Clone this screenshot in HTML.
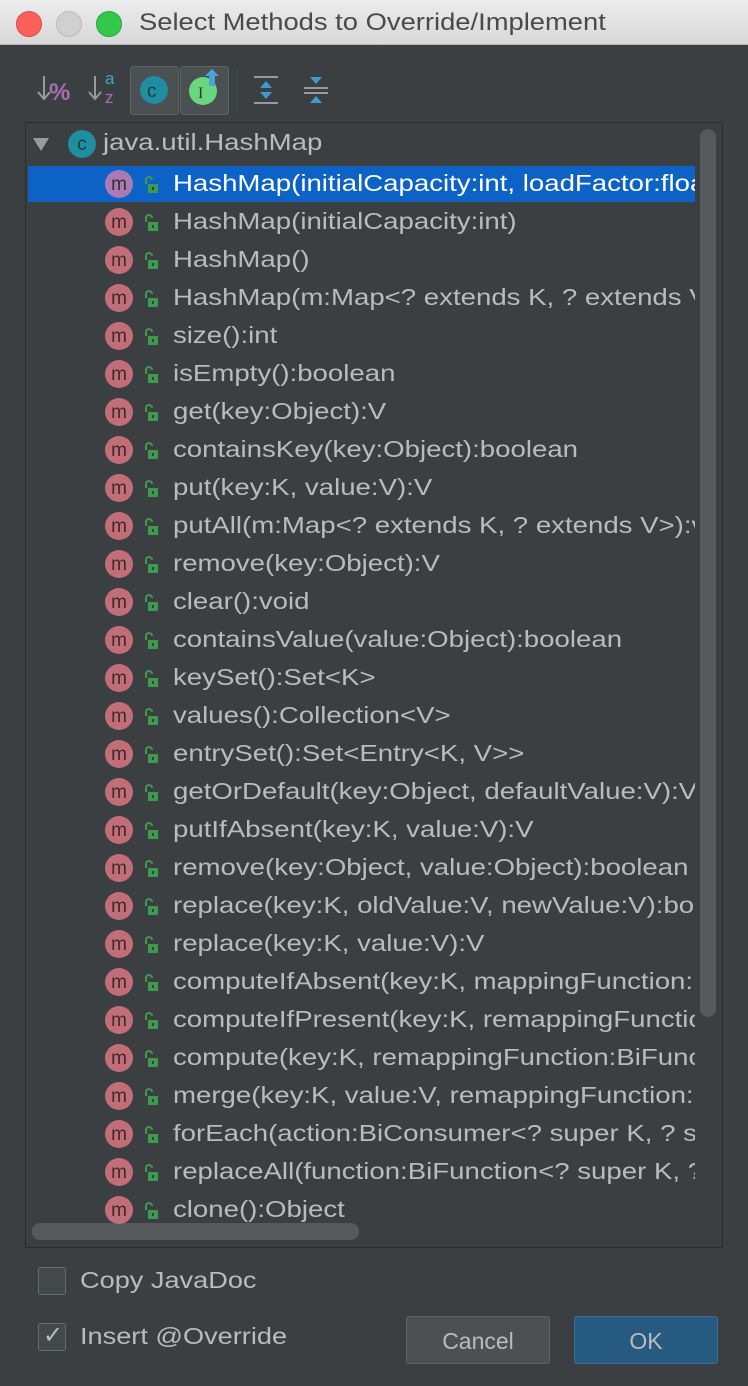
<!DOCTYPE html><html><head><style>
body{margin:0;width:748px;height:1386px;background:#3c3f41;font-family:"Liberation Sans",sans-serif;overflow:hidden;position:relative}
.tb{position:absolute;left:0;top:0;width:748px;height:44px;background:linear-gradient(#ececec,#d8d8d8);border-bottom:1px solid #b8b8b8}
.dot{position:absolute;top:11px;width:24px;height:24px;border-radius:50%}
.tt{position:absolute;left:139px;top:9px;font-size:24px;color:#4a4a4a;transform:scaleX(1.14);transform-origin:left}
.list{position:absolute;left:25px;top:122px;width:696px;height:1124px;border:1px solid #2b2b2b;background:#3c3f41;overflow:hidden}
.row{position:absolute;left:2px;width:667px;height:36px;color:#bbb;font-size:23px;white-space:nowrap;overflow:hidden}
.row span.t{position:absolute;left:145px;top:4px;transform:scaleX(1.2);transform-origin:left}
.m{position:absolute;left:77px;top:4px;width:28px;height:28px;border-radius:50%;background:#c26e78;color:#3c2a2d;font-size:19px;text-align:center;line-height:30px}
.lk{position:absolute;left:115px;top:10px}
.sel{background:#0d63c5;color:#fff}
.sel .m{background:#a97bb5}
.vs{position:absolute;left:674px;top:6px;width:16px;height:888px;background:#56595b;border-radius:8px}
.hs{position:absolute;left:6px;top:1100px;width:327px;height:17px;background:#56595b;border-radius:8px}
.cb{position:absolute;left:38px;width:28px;height:28px;border:1px solid #6b6b6b;border-radius:3px;background:#43494a;box-sizing:border-box}
.lbl{position:absolute;left:80px;font-size:23px;color:#bbb;transform:scaleX(1.18);transform-origin:left}
.btn{position:absolute;top:1316px;width:144px;height:48px;border-radius:3px;font-size:23px;color:#bbb;text-align:center;line-height:48px;box-sizing:border-box}
</style></head><body>
<div class="tb">
<div class="dot" style="left:16px;background:#fc605b;border:1px solid #de4a45"></div>
<div class="dot" style="left:56px;background:#d0d0d0;border:1px solid #bbb"></div>
<div class="dot" style="left:96px;background:#34c84a;border:1px solid #27a83a"></div>
<div class="tt">Select Methods to Override/Implement</div>
</div>
<svg style="position:absolute;left:0;top:60px" width="340" height="60">
<path d="M44 16v22M38 32l6 7 6-7" fill="none" stroke="#9a9a9a" stroke-width="2"/>
<text x="49" y="40" font-size="24" fill="#a56fb2" font-weight="bold" font-family="Liberation Sans">%</text>
<path d="M95 16v22M89 32l6 7 6-7" fill="none" stroke="#9a9a9a" stroke-width="2"/>
<text x="105" y="24" font-size="17" fill="#3aa5c9" font-family="Liberation Sans">a</text>
<text x="105" y="43" font-size="17" fill="#a56fb2" font-family="Liberation Sans">z</text>
<rect x="130.5" y="6.5" width="48" height="48" rx="3" fill="#4b5053" stroke="#5e6366"/>
<rect x="180.5" y="6.5" width="48" height="48" rx="3" fill="#4b5053" stroke="#5e6366"/>
<circle cx="154" cy="30" r="14" fill="#1e8ea0"/><text x="147" y="37" font-size="19" fill="#1c3a40" font-family="Liberation Sans">c</text>
<circle cx="203" cy="31" r="14" fill="#6bd67e"/><text x="198" y="38" font-size="16" fill="#2c3c2c" font-family="Liberation Serif">I</text>
<path d="M205 16l7 -7 7 7h-4v10h-6v-10z" fill="#4aa3dc"/>
<line x1="237" y1="10" x2="237" y2="54" stroke="#666" stroke-dasharray="1,3"/>
<rect x="254" y="16" width="24" height="2" fill="#999"/><rect x="254" y="42" width="24" height="2" fill="#999"/>
<path d="M260 28l6-7 6 7zM260 32l6 7 6-7z" fill="#3a9cd0"/>
<rect x="304" y="27" width="24" height="2" fill="#999"/><rect x="304" y="32" width="24" height="2" fill="#999"/>
<path d="M310 17l6 7 6-7zM310 43l6-7 6 7z" fill="#3a9cd0"/>
</svg>
<div class="list">
<div class="vs"></div><div class="hs"></div>
<svg style="position:absolute;left:6px;top:12px" width="20" height="20"><path d="M1 3h16l-8 13z" fill="#9a9a9a"/></svg>
<div style="position:absolute;left:42px;top:7px;width:28px;height:28px;border-radius:50%;background:#1e8ea0;color:#1c3a40;text-align:center;font-size:19px;line-height:29px">c</div>
<div style="position:absolute;left:77px;top:6px;font-size:23px;color:#bbb;transform:scaleX(1.2);transform-origin:left">java.util.HashMap</div>
<div id="rows"></div>
</div>
<div class="cb" style="top:1267px"></div><div class="lbl" style="top:1267px">Copy JavaDoc</div>
<div class="cb" style="top:1323px"></div><div style="position:absolute;left:43px;top:1321px;font-size:24px;color:#bbb">✓</div><div class="lbl" style="top:1323px">Insert @Override</div>
<div class="btn" style="left:406px;background:#4c5052;border:1px solid #5e6366">Cancel</div>
<div class="btn" style="left:574px;background:#275a80;border:1px solid #3a6f96">OK</div>
<script>
var t=["HashMap(initialCapacity:int, loadFactor:float)","HashMap(initialCapacity:int)","HashMap()","HashMap(m:Map<? extends K, ? extends V>)","size():int","isEmpty():boolean","get(key:Object):V","containsKey(key:Object):boolean","put(key:K, value:V):V","putAll(m:Map<? extends K, ? extends V>):void","remove(key:Object):V","clear():void","containsValue(value:Object):boolean","keySet():Set<K>","values():Collection<V>","entrySet():Set<Entry<K, V>>","getOrDefault(key:Object, defaultValue:V):V","putIfAbsent(key:K, value:V):V","remove(key:Object, value:Object):boolean","replace(key:K, oldValue:V, newValue:V):boolean","replace(key:K, value:V):V","computeIfAbsent(key:K, mappingFunction:Function)","computeIfPresent(key:K, remappingFunction:BiFunction)","compute(key:K, remappingFunction:BiFunction)","merge(key:K, value:V, remappingFunction:BiFunction)","forEach(action:BiConsumer<? super K, ? super V>)","replaceAll(function:BiFunction<? super K, ? super V>)","clone():Object"];
var h="";t.forEach(function(s,i){var y=43+i*38;h+='<div class="row'+(i==0?' sel':'')+'" style="top:'+y+'px"><div class="m">m</div><svg class="lk" width="16" height="18"><path d="M3 8V4a3 3 0 0 1 6 0" fill="none" stroke="#3e9a4f" stroke-width="2"/><rect x="5" y="8" width="10" height="9" fill="#3e9a4f"/><rect x="9" y="11" width="2" height="3" fill="#3c3f41"/></svg><span class="t">'+s.replace(/</g,"&lt;").replace(/>/g,"&gt;")+'</span></div>';});
document.getElementById("rows").innerHTML=h;
</script>
</body></html>
